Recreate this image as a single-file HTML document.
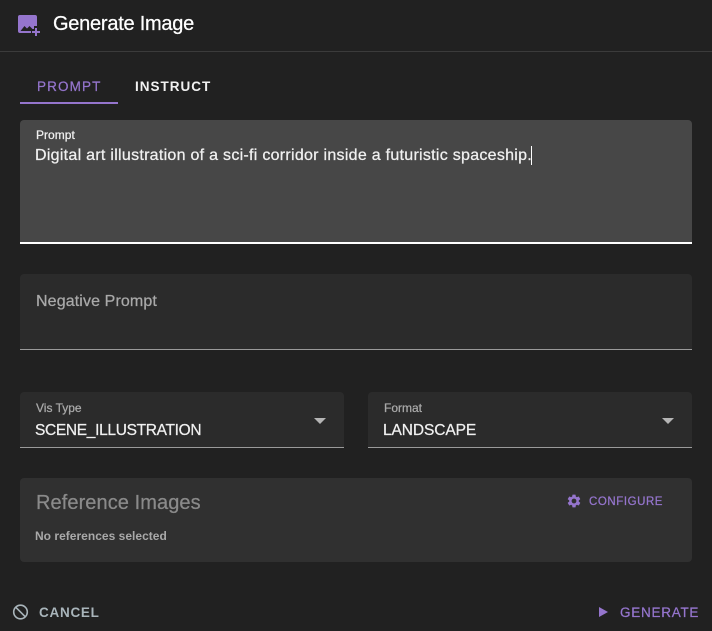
<!DOCTYPE html>
<html><head><meta charset="utf-8">
<style>
html,body{margin:0;padding:0;width:712px;height:631px;overflow:hidden;background:#212121;font-family:"Liberation Sans",sans-serif;color:#fff}
.t{position:absolute;white-space:nowrap;line-height:1}
.b{position:absolute}
.m{-webkit-text-stroke:.25px currentColor}
</style></head><body>
<svg class="b" style="left:16px;top:13px" width="26" height="26" viewBox="0 0 26 26">
<path fill="#9575cd" d="M4 2H19a2 2 0 0 1 2 2V13H18V16H15V20H4a2 2 0 0 1-2-2V4a2 2 0 0 1 2-2Z"/>
<path fill="#212121" d="M4.5 18L8.5 13L11 15.5L13.5 13L16.5 16L15 16V18Z"/>
<path fill="#9575cd" d="M19 15H21V18H24V20H21V23H19V20H16V18H19Z"/>
</svg>
<div class="t m" style="left:53px;top:14px;font-size:20px;letter-spacing:-.25px;color:#fff">Generate Image</div>
<div class="b" style="left:0;top:51px;width:712px;height:1px;background:#3b3b3b"></div>

<div class="t m" style="left:37px;top:79.5px;font-size:13.5px;letter-spacing:1.12px;color:#9575cd">PROMPT</div>
<div class="t" style="left:135px;top:79.5px;font-size:13.5px;font-weight:bold;letter-spacing:1px;color:#f2f2f2">INSTRUCT</div>
<div class="b" style="left:20px;top:102px;width:98px;height:2px;background:#9575cd"></div>

<div class="b" style="left:20px;top:120px;width:672px;height:124px;background:#474747;border-radius:4px 4px 0 0;box-sizing:border-box;border-bottom:2px solid #fff"></div>
<div class="t m" style="left:36px;top:129px;font-size:12px;letter-spacing:.02px;color:#f0f0f0">Prompt</div>
<div class="t m" style="left:35px;top:148px;font-size:16px;letter-spacing:.28px;color:#f0f0f0">Digital art illustration of a sci-fi corridor inside a futuristic spaceship.</div>
<div class="b" style="left:531px;top:146px;width:1px;height:19px;background:#fff"></div>

<div class="b" style="left:20px;top:274px;width:672px;height:76px;background:#2b2b2b;border-radius:4px 4px 0 0;box-sizing:border-box;border-bottom:1px solid #9a9a9a"></div>
<div class="t m" style="left:36px;top:294px;font-size:16px;letter-spacing:.12px;color:#a9a9a9">Negative Prompt</div>

<div class="b" style="left:20px;top:392px;width:324px;height:56px;background:#2b2b2b;border-radius:4px 4px 0 0;box-sizing:border-box;border-bottom:1px solid #9a9a9a"></div>
<div class="t m" style="left:36px;top:402px;font-size:12px;color:#a9a9a9">Vis Type</div>
<div class="t m" style="left:35px;top:422.5px;font-size:15.5px;letter-spacing:-.32px;color:#f0f0f0">SCENE_ILLUSTRATION</div>
<div class="b" style="left:314px;top:418px;width:0;height:0;border-left:6px solid transparent;border-right:6px solid transparent;border-top:6px solid #b5b5b5"></div>

<div class="b" style="left:368px;top:392px;width:324px;height:56px;background:#2b2b2b;border-radius:4px 4px 0 0;box-sizing:border-box;border-bottom:1px solid #9a9a9a"></div>
<div class="t m" style="left:384px;top:402px;font-size:12px;color:#a9a9a9">Format</div>
<div class="t m" style="left:383px;top:422.5px;font-size:15.5px;letter-spacing:-.09px;color:#f0f0f0">LANDSCAPE</div>
<div class="b" style="left:662px;top:418px;width:0;height:0;border-left:6px solid transparent;border-right:6px solid transparent;border-top:6px solid #b5b5b5"></div>

<div class="b" style="left:20px;top:478px;width:672px;height:84px;background:#303030;border-radius:4px"></div>
<div class="t m" style="left:36px;top:493px;font-size:20px;letter-spacing:.08px;color:#8a8a8a">Reference Images</div>
<div class="t" style="left:35px;top:530px;font-size:12px;font-weight:bold;letter-spacing:.02px;color:#a9a9a9">No references selected</div>
<svg class="b" style="left:566px;top:493px" width="16" height="16" viewBox="0 0 24 24"><path fill="#9575cd" d="M19.14 12.94c.04-.3.06-.61.06-.94s-.02-.64-.07-.94l2.03-1.58a.5.5 0 0 0 .12-.61l-1.92-3.32a.5.5 0 0 0-.59-.22l-2.39.96a7 7 0 0 0-1.62-.94l-.36-2.54a.5.5 0 0 0-.48-.41h-3.84a.5.5 0 0 0-.47.41l-.36 2.54c-.59.24-1.13.57-1.62.94l-2.39-.96a.5.5 0 0 0-.59.22L2.74 8.87a.5.5 0 0 0 .12.61l2.03 1.58c-.05.3-.09.63-.09.94s.02.64.07.94l-2.03 1.58a.5.5 0 0 0-.12.61l1.92 3.32c.12.22.37.29.59.22l2.39-.96c.5.38 1.03.7 1.62.94l.36 2.54c.05.24.24.41.48.41h3.84c.24 0 .44-.17.47-.41l.36-2.54c.59-.24 1.13-.56 1.62-.94l2.39.96c.22.08.47 0 .59-.22l1.92-3.32a.5.5 0 0 0-.12-.61l-2.01-1.58zM12 15.6a3.6 3.6 0 1 1 0-7.2 3.6 3.6 0 0 1 0 7.2z"/></svg>
<div class="t m" style="left:589px;top:497px;font-size:11.5px;letter-spacing:.56px;color:#9575cd">CONFIGURE</div>

<svg class="b" style="left:11px;top:603px" width="18" height="18" viewBox="0 0 18 18"><circle cx="9.5" cy="9" r="6.8" fill="none" stroke="#a9b5bb" stroke-width="1.6"/><path d="M4.7 4.2L14.3 13.8" stroke="#a9b5bb" stroke-width="1.6"/></svg>
<div class="t" style="left:39px;top:605.5px;font-size:13.5px;font-weight:bold;letter-spacing:.73px;color:#a9b5bb">CANCEL</div>
<div class="b" style="left:599px;top:607px;width:0;height:0;border-top:5px solid transparent;border-bottom:5px solid transparent;border-left:9px solid #9575cd"></div>
<div class="t m" style="left:620px;top:605.5px;font-size:13.5px;letter-spacing:.74px;color:#9575cd">GENERATE</div>
</body></html>
